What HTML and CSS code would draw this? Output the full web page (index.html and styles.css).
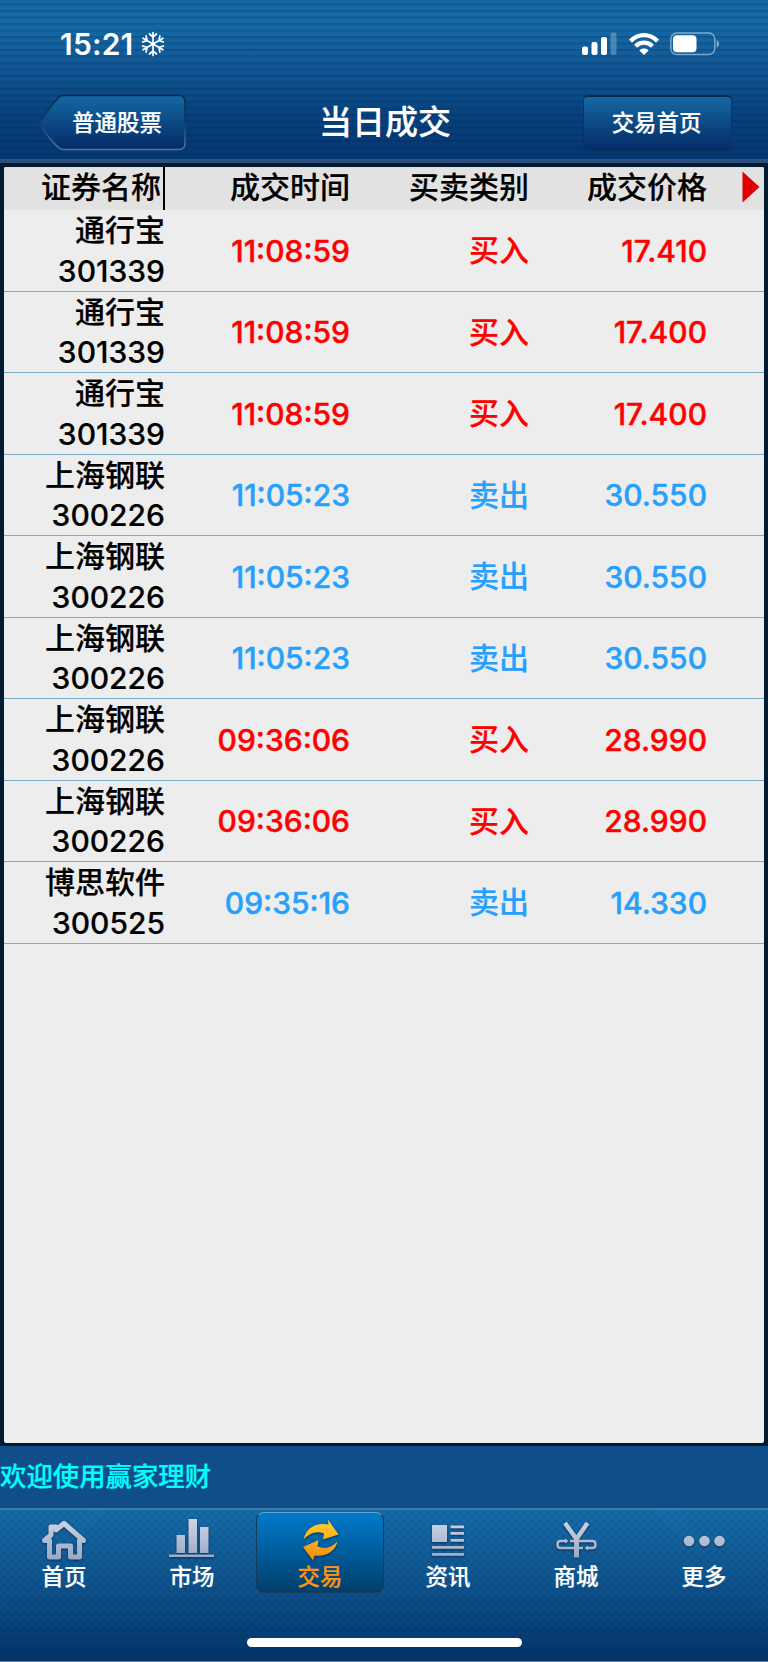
FILE: index.html
```html
<!DOCTYPE html>
<html lang="zh-CN">
<head>
    <meta charset="UTF-8">
    <meta name="viewport" content="width=device-width, initial-scale=1.0">
    <title>当日成交</title>
    <link rel="stylesheet" href="styles.css">
</head>
<body>

<header class="header">
    <div class="status-bar">
        <div class="status-time">
            <span>15:21</span>
            <svg width="24" height="26" viewBox="-12 -13 24 26" fill="none" stroke="#fff" stroke-width="1.7" stroke-linecap="round">
                <g id="flake">
                    <path d="M0-11.5V11.5M-3.5-10L0-6.8L3.5-10M-3.5 10L0 6.8L3.5 10"/>
                </g>
                <use href="#flake" transform="rotate(60)"/>
                <use href="#flake" transform="rotate(120)"/>
            </svg>
        </div>
        <div class="status-icons">
            <svg width="36" height="24" viewBox="0 0 36 24" fill="#fff">
                <rect x="0" y="14.5" width="6" height="8.5" rx="2"/>
                <rect x="9.5" y="10" width="6" height="13" rx="2"/>
                <rect x="19" y="5" width="6" height="18" rx="2"/>
                <rect x="28.5" y="0.5" width="6" height="22.5" rx="2" opacity="0.25"/>
            </svg>
            <svg width="32" height="24" viewBox="0 0 32 24" fill="none" stroke="#fff" stroke-width="4.2">
                <path d="M2.5 9.2C10 1.2 22 1.2 29.5 9.2"/>
                <path d="M7.6 14.2C12.3 9.5 19.7 9.5 24.4 14.2"/>
                <path d="M16 23L11.3 18.4C13.9 16 18.1 16 20.7 18.4Z" fill="#fff" stroke="none"/>
            </svg>
            <svg width="50" height="24" viewBox="0 0 50 24">
                <rect x="0.8" y="1" width="44" height="21.6" rx="6" fill="none" stroke="#fff" stroke-width="1.5" opacity="0.45"/>
                <rect x="3" y="3.3" width="23.5" height="17" rx="4" fill="#fff"/>
                <path d="M46.7 8.2Q49.2 9.4 49.2 11.8T46.7 15.4Z" fill="#fff" opacity="0.5"/>
            </svg>
        </div>
    </div>
    <div class="nav-bar">
        <button class="back-button" type="button">
            <svg class="back-shape" width="149" height="58" viewBox="0 0 149 58">
                <defs>
                    <linearGradient id="backFill" x1="0" y1="0" x2="0" y2="1">
                        <stop offset="0" stop-color="#1568a4"/>
                        <stop offset="1" stop-color="#042b66"/>
                    </linearGradient>
                    <linearGradient id="backLine" x1="0" y1="0" x2="0" y2="1">
                        <stop offset="0" stop-color="#062b48"/>
                        <stop offset="0.45" stop-color="#0a3a66"/>
                        <stop offset="1" stop-color="#53779f"/>
                    </linearGradient>
                </defs>
                <path d="M1 29.5C8 19 14 10 21 3Q23 1.5 26 1.5H141Q147 1.5 147 8V49Q147 55.5 141 55.5H26Q23 55.5 21 54C14 48 8 40 1 29.5Z" fill="url(#backFill)" stroke="url(#backLine)" stroke-width="1.5"/>
            </svg>
            <span class="back-label">普通股票</span>
        </button>
        <h1 class="title">当日成交</h1>
        <button class="home-button" type="button">交易首页</button>
    </div>
</header>

<main class="panel">
    <div class="table">
        <div class="row row-head">
            <div class="col-name">证券名称</div>
            <div class="col-time">成交时间</div>
            <div class="col-type">买卖类别</div>
            <div class="col-price">成交价格</div>
            <svg class="more-arrow" width="18" height="32" viewBox="0 0 18 32"><path d="M0.5 0.5L17.5 16L0.5 31.5Z" fill="#e00000"/></svg>
        </div>
        <div class="row buy">
            <div class="col-name">通行宝<br>301339</div>
            <div class="col-time">11:08:59</div>
            <div class="col-type">买入</div>
            <div class="col-price">17.410</div>
        </div>
        <div class="row buy">
            <div class="col-name">通行宝<br>301339</div>
            <div class="col-time">11:08:59</div>
            <div class="col-type">买入</div>
            <div class="col-price">17.400</div>
        </div>
        <div class="row buy">
            <div class="col-name">通行宝<br>301339</div>
            <div class="col-time">11:08:59</div>
            <div class="col-type">买入</div>
            <div class="col-price">17.400</div>
        </div>
        <div class="row sell">
            <div class="col-name">上海钢联<br>300226</div>
            <div class="col-time">11:05:23</div>
            <div class="col-type">卖出</div>
            <div class="col-price">30.550</div>
        </div>
        <div class="row sell">
            <div class="col-name">上海钢联<br>300226</div>
            <div class="col-time">11:05:23</div>
            <div class="col-type">卖出</div>
            <div class="col-price">30.550</div>
        </div>
        <div class="row sell">
            <div class="col-name">上海钢联<br>300226</div>
            <div class="col-time">11:05:23</div>
            <div class="col-type">卖出</div>
            <div class="col-price">30.550</div>
        </div>
        <div class="row buy">
            <div class="col-name">上海钢联<br>300226</div>
            <div class="col-time">09:36:06</div>
            <div class="col-type">买入</div>
            <div class="col-price">28.990</div>
        </div>
        <div class="row buy">
            <div class="col-name">上海钢联<br>300226</div>
            <div class="col-time">09:36:06</div>
            <div class="col-type">买入</div>
            <div class="col-price">28.990</div>
        </div>
        <div class="row sell">
            <div class="col-name">博思软件<br>300525</div>
            <div class="col-time">09:35:16</div>
            <div class="col-type">卖出</div>
            <div class="col-price">14.330</div>
        </div>
    </div>
</main>

<div class="notice">欢迎使用赢家理财</div>

<footer class="footer">
    <svg class="defs" width="0" height="0">
        <defs>
            <linearGradient id="silver" gradientUnits="userSpaceOnUse" x1="0" y1="2" x2="0" y2="42">
                <stop offset="0" stop-color="#ccd3e3"/>
                <stop offset="1" stop-color="#98a5c3"/>
            </linearGradient>
            <linearGradient id="gold" gradientUnits="userSpaceOnUse" x1="0" y1="2" x2="0" y2="42">
                <stop offset="0" stop-color="#ffcf2b"/>
                <stop offset="1" stop-color="#f08a10"/>
            </linearGradient>
        </defs>
    </svg>
    <nav class="tabs">
        <div class="tab">
            <svg width="46" height="44" viewBox="0 0 46 44" fill="none" stroke="url(#silver)" stroke-width="5" stroke-linejoin="round" stroke-linecap="round">
                <path d="M3.5 21.5L10 16V8H15V11L23 4.5L42.5 21.5H38.5V38H29.5V27H17.5V38H8.5V21.5Z"/>
            </svg>
            <span>首页</span>
        </div>
        <div class="tab">
            <svg width="46" height="44" viewBox="0 0 46 44" fill="url(#silver)">
                <rect x="7.5" y="16" width="8.5" height="18"/>
                <rect x="19.5" y="0" width="8.5" height="34"/>
                <rect x="31" y="8" width="8.5" height="26"/>
                <rect x="0" y="35.5" width="45" height="2.5"/>
            </svg>
            <span>市场</span>
        </div>
        <div class="tab tab-active">
            <svg width="46" height="44" viewBox="0 0 46 44" fill="url(#gold)">
                <path d="M6.5 20.5C8.5 9.5 18.5 3 31.5 5.5L31 0.5L41.5 15.500L26 20.500L27 14.500C19 11.500 12.500 14.500 6.500 20.500Z"/>
                <path d="M40.500 22.500C38 33 28.500 38 17.500 36.500L16 41.500L6 28L21.500 21L20.500 27.500C28.500 30.500 34.500 28.500 40.500 22.500Z"/>
            </svg>
            <span>交易</span>
        </div>
        <div class="tab">
            <svg width="46" height="44" viewBox="0 0 46 44" fill="url(#silver)">
                <rect x="7" y="6" width="15" height="17"/>
                <rect x="25.5" y="6.5" width="13.5" height="2.8"/>
                <rect x="25.5" y="13" width="13.5" height="2.8"/>
                <rect x="25.5" y="20" width="13.5" height="2.8"/>
                <rect x="7" y="27" width="32" height="2.8"/>
                <rect x="7" y="34" width="32" height="2.8"/>
            </svg>
            <span>资讯</span>
        </div>
        <div class="tab">
            <svg width="46" height="44" viewBox="0 0 46 44" fill="none" stroke="url(#silver)">
                <path d="M12 4L23.5 20L34.5 4" stroke-width="4.5"/>
                <path d="M23.5 19V38.5" stroke-width="5"/>
                <path d="M14 22H7.5Q4.5 22 4.5 25.5T7.5 29H30M17 22H39.5Q42.5 22 42.5 25.5T39.5 29H33" stroke-width="2.5"/>
                <path d="M12 19.5L15.5 22L12 24.5ZM35 26.5L31.5 29L35 31.5Z" fill="url(#silver)" stroke="none"/>
            </svg>
            <span>商城</span>
        </div>
        <div class="tab">
            <svg width="46" height="44" viewBox="0 0 46 44" fill="url(#silver)">
                <circle cx="8" cy="22" r="5.3"/>
                <circle cx="23.5" cy="22" r="5.3"/>
                <circle cx="38.5" cy="22" r="5.3"/>
            </svg>
            <span>更多</span>
        </div>
    </nav>
    <div class="home-indicator"></div>
</footer>

</body>
</html>
```

FILE: styles.css
```css
* {
    box-sizing: border-box;
}
body {
    display: flex;
    flex-direction: column;
    height: 1662px;
    margin: 0;
    background-color: #001b2e;
    font-family: Inter, "Noto Sans CJK SC", sans-serif;
    font-weight: 500;
    color: #fff;
    -webkit-text-stroke: 0.2px;
}
button {
    border: none;
    padding: 0;
    font-family: inherit;
    font-weight: 500;
    font-size: 22.4px;
    color: #fff;
}

/* Header */
.header {
    height: 163px;
    border-bottom: 4px solid #2b507f;
    background:
        repeating-linear-gradient(to bottom, rgba(0, 30, 80, 0) 0, rgba(0, 30, 80, 0) 3px, rgba(0, 25, 70, 0.22) 4px, rgba(0, 30, 80, 0) 6.5px),
        linear-gradient(to bottom, #1468a2 0, #156ba5 22px, #125f9c 50px, #0d4f8b 85px, #07427d 115px, #043672 160px);
}
.status-bar {
    display: flex;
    justify-content: space-between;
    height: 86px;
    padding: 32px 48px 0 60px;
}
.status-time {
    display: flex;
    align-items: center;
    gap: 7px;
    height: 24px;
    font-size: 30px;
    font-weight: 600;
    letter-spacing: 0.2px;
    -webkit-text-stroke: 0;
}
.status-icons {
    display: flex;
    gap: 10px;
    height: 24px;
}
.nav-bar {
    display: flex;
    justify-content: space-between;
    align-items: center;
    padding: 8px 36px 0 38px;
}
.back-button {
    display: grid;
    width: 149px;
    height: 58px;
    background: none;
}
.back-shape,
.back-label {
    grid-area: 1 / 1;
}
.back-label {
    align-self: center;
    padding: 0 0 4px 9px;
}
.title {
    margin: 0;
    padding-bottom: 3px;
    font-size: 33px;
    font-weight: 500;
    line-height: 48px;
}
.home-button {
    width: 149px;
    height: 56px;
    margin-bottom: 1px;
    padding: 0 2px 4px 0;
    border: 1px solid #0a345d;
    border-top: 2px solid #062b48;
    border-radius: 5px;
    background: linear-gradient(to bottom, #1568a4, #042b66);
}

/* Table */
.panel {
    flex: 1;
    padding: 4px 4px 3px;
    background-color: #001b2e;
}
.table {
    height: 100%;
    border-radius: 2px;
    background-color: #ededed;
    overflow: hidden;
}
.row {
    display: flex;
    align-items: center;
    height: 81.5px;
    border-bottom: 1.5px solid #77adc9;
    font-size: 30px;
    line-height: 40px;
    text-align: right;
}
.row-head {
    align-items: flex-start;
    height: 43px;
    border-bottom: none;
    background-color: #e2e2e2;
    color: #000;
}
.col-name {
    width: 161px;
    padding-top: 1px;
    line-height: 40.5px;
    color: #000;
}
.row-head .col-name {
    height: 43px;
    padding-top: 0;
    padding-right: 2px;
    border-right: 2px solid #000;
    line-height: 40px;
}
.col-time {
    width: 185px;
}
.col-type {
    width: 179px;
}
.col-price {
    width: 178px;
}
.buy .col-time,
.buy .col-price,
.sell .col-time,
.sell .col-price {
    padding-top: 1px;
    -webkit-text-stroke: 0.4px;
}
.more-arrow {
    margin: 4px 0 0 35px;
}
.buy {
    color: #ff0000;
}
.sell {
    color: #26a0fc;
}

/* Notice */
.notice {
    height: 62px;
    background-color: #104e8b;
    color: #00ffff;
    font-size: 26.4px;
    line-height: 61px;
}

/* Footer */
.footer {
    height: 154px;
    border-top: 2px solid #407dac;
    border-bottom: 1px solid #5680aa;
    background:
        repeating-linear-gradient(45deg, rgba(0, 40, 90, 0.13) 0, rgba(0, 40, 90, 0.13) 1.4px, transparent 1.4px, transparent 5.65px),
        repeating-linear-gradient(-45deg, rgba(0, 40, 90, 0.13) 0, rgba(0, 40, 90, 0.13) 1.4px, transparent 1.4px, transparent 5.65px),
        linear-gradient(to bottom, #176da8, #0d508a 55%, #033269);
}
.defs {
    display: block;
}
.tabs {
    display: flex;
    padding-top: 2px;
}
.tab {
    display: flex;
    flex-direction: column;
    align-items: center;
    width: 128px;
    height: 81px;
    padding-top: 6px;
    border: 1px solid transparent;
    border-radius: 8px;
    font-size: 22.4px;
    line-height: 30px;
}
.tab svg {
    flex-shrink: 0;
    margin-bottom: -1px;
    filter: drop-shadow(0 1px 1px rgba(0, 20, 50, 0.6));
}
.tab-active {
    border-color: #173c5b;
    border-top-color: #5da5d0;
    background: linear-gradient(to bottom, #0079ca, #003f6b);
    color: #ff9412;
}
.home-indicator {
    width: 275px;
    height: 9px;
    margin: 45px auto 0;
    border-radius: 5px;
    background-color: #fff;
}
```
